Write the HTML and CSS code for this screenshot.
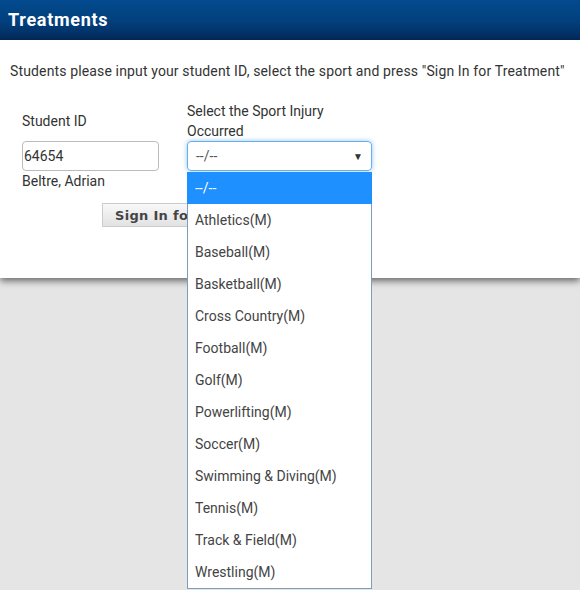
FILE: index.html
```html
<!DOCTYPE html>
<html lang="en">
<head>
  <meta charset="UTF-8" />
  <title>Treatments</title>
  <link rel="stylesheet" href="styles.css">
</head>
<body>
  <div class="title-bar">Treatments</div>

  <div class="panel">
    <p class="intro">Students please input your student ID, select the sport and press "Sign In for Treatment"</p>

    <div class="form-row">
      <div class="field field-id">
        <label class="label">Student ID</label>
        <input class="text-input" type="text" value="64654">
        <div class="student-name">Beltre, Adrian</div>
      </div>

      <div class="field field-sport">
        <label class="label">Select the Sport Injury Occurred</label>
        <div class="select-wrap">
          <div class="select-box">
            <span>--/--</span>
            <span class="arrow">&#9660;</span>
          </div>
          <ul class="dropdown">
            <li class="selected">--/--</li>
            <li>Athletics(M)</li>
            <li>Baseball(M)</li>
            <li>Basketball(M)</li>
            <li>Cross Country(M)</li>
            <li>Football(M)</li>
            <li>Golf(M)</li>
            <li>Powerlifting(M)</li>
            <li>Soccer(M)</li>
            <li>Swimming &amp; Diving(M)</li>
            <li>Tennis(M)</li>
            <li>Track &amp; Field(M)</li>
            <li>Wrestling(M)</li>
          </ul>
        </div>
      </div>
    </div>

    <button class="sign-btn">Sign In for Treatment</button>
  </div>
</body>
</html>
```

FILE: styles.css
```css
body {
  margin: 0;
  background-color: #e5e5e5;
  font-family: Roboto, "Liberation Sans", sans-serif;
  font-size: 14px;
  color: #333;
  height: 590px;
  overflow: hidden;
}

.title-bar {
  height: 40px;
  line-height: 40px;
  padding-left: 8px;
  background: linear-gradient(to bottom, #024b8e 0%, #023f7c 55%, #032a5c 100%);
  color: #fff;
  font-weight: bold;
  font-size: 18px;
  letter-spacing: 0.7px;
}

.panel {
  background-color: #fff;
  padding: 21px 10px 51px 10px;
  box-shadow: 0 3px 7px rgba(0, 0, 0, 0.55);
  position: relative;
}

.intro {
  margin: 0;
  line-height: 20px;
  letter-spacing: 0.14px;
}

.form-row {
  display: flex;
  align-items: flex-start;
  gap: 28px;
  margin-top: 20px;
  padding-left: 12px;
}

.field {
  display: flex;
  flex-direction: column;
}

.field-id {
  width: 137px;
  padding-top: 10px;
}

.field-sport {
  width: 185px;
}

.label {
  line-height: 20px;
}

.field-id .label {
  margin-bottom: 10px;
}

.text-input {
  box-sizing: border-box;
  width: 137px;
  height: 30px;
  margin: 0;
  padding: 0 1px;
  border: 1px solid #bbb;
  border-radius: 4px;
  font-family: inherit;
  font-size: 14px;
  color: #333;
}

.student-name {
  line-height: 20px;
}

.select-wrap {
  position: relative;
}

.select-box {
  box-sizing: border-box;
  height: 30px;
  display: flex;
  justify-content: space-between;
  align-items: center;
  padding: 0 8px;
  border: 1px solid #66afe9;
  border-radius: 4px;
  box-shadow: 0 0 5px rgba(102, 175, 233, 0.7);
  color: #555;
}

.arrow {
  font-size: 10px;
  color: #333;
}

.dropdown {
  position: absolute;
  top: 31px;
  left: 0;
  width: 185px;
  box-sizing: border-box;
  margin: 0;
  padding: 0;
  list-style: none;
  background-color: #fff;
  border: 1px solid #7f9db9;
  border-top: none;
  z-index: 5;
}

.dropdown li {
  height: 32px;
  line-height: 32px;
  padding-left: 7px;
  color: #444;
  white-space: nowrap;
}

.dropdown li.selected {
  background-color: #1e90ff;
  color: #fff;
  margin: 0 -1px;
  padding-left: 8px;
}

.sign-btn {
  margin: 12px 0 0 92px;
  height: 24px;
  padding: 0 12px;
  border: 1px solid #ccc;
  background: linear-gradient(to bottom, #f8f8f8 0%, #e2e2e2 100%);
  font-family: "DejaVu Sans", sans-serif;
  font-weight: bold;
  font-size: 13px;
  color: #444;
  letter-spacing: 0.3px;
}
```
